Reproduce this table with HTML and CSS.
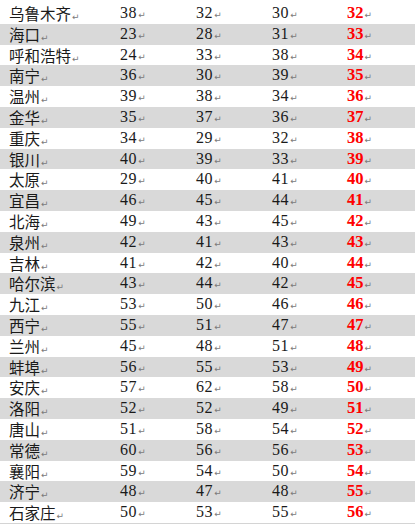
FILE: index.html
```html
<!DOCTYPE html>
<html lang="zh">
<head>
<meta charset="utf-8">
<title>城市排名</title>
<link rel="stylesheet" href="styles.css">
</head>
<body>
<div class="table">
  <div class="row"><span class="city">乌鲁木齐<i class="pm">↵</i></span><span class="num">38<i class="pm">↵</i></span><span class="num">32<i class="pm">↵</i></span><span class="num">30<i class="pm">↵</i></span><span class="rank">32<i class="pm">↵</i></span></div>
  <div class="row alt"><span class="city">海口<i class="pm">↵</i></span><span class="num">23<i class="pm">↵</i></span><span class="num">28<i class="pm">↵</i></span><span class="num">31<i class="pm">↵</i></span><span class="rank">33<i class="pm">↵</i></span></div>
  <div class="row"><span class="city">呼和浩特<i class="pm">↵</i></span><span class="num">24<i class="pm">↵</i></span><span class="num">33<i class="pm">↵</i></span><span class="num">38<i class="pm">↵</i></span><span class="rank">34<i class="pm">↵</i></span></div>
  <div class="row alt"><span class="city">南宁<i class="pm">↵</i></span><span class="num">36<i class="pm">↵</i></span><span class="num">30<i class="pm">↵</i></span><span class="num">39<i class="pm">↵</i></span><span class="rank">35<i class="pm">↵</i></span></div>
  <div class="row"><span class="city">温州<i class="pm">↵</i></span><span class="num">39<i class="pm">↵</i></span><span class="num">38<i class="pm">↵</i></span><span class="num">34<i class="pm">↵</i></span><span class="rank">36<i class="pm">↵</i></span></div>
  <div class="row alt"><span class="city">金华<i class="pm">↵</i></span><span class="num">35<i class="pm">↵</i></span><span class="num">37<i class="pm">↵</i></span><span class="num">36<i class="pm">↵</i></span><span class="rank">37<i class="pm">↵</i></span></div>
  <div class="row"><span class="city">重庆<i class="pm">↵</i></span><span class="num">34<i class="pm">↵</i></span><span class="num">29<i class="pm">↵</i></span><span class="num">32<i class="pm">↵</i></span><span class="rank">38<i class="pm">↵</i></span></div>
  <div class="row alt"><span class="city">银川<i class="pm">↵</i></span><span class="num">40<i class="pm">↵</i></span><span class="num">39<i class="pm">↵</i></span><span class="num">33<i class="pm">↵</i></span><span class="rank">39<i class="pm">↵</i></span></div>
  <div class="row"><span class="city">太原<i class="pm">↵</i></span><span class="num">29<i class="pm">↵</i></span><span class="num">40<i class="pm">↵</i></span><span class="num">41<i class="pm">↵</i></span><span class="rank">40<i class="pm">↵</i></span></div>
  <div class="row alt"><span class="city">宜昌<i class="pm">↵</i></span><span class="num">46<i class="pm">↵</i></span><span class="num">45<i class="pm">↵</i></span><span class="num">44<i class="pm">↵</i></span><span class="rank">41<i class="pm">↵</i></span></div>
  <div class="row"><span class="city">北海<i class="pm">↵</i></span><span class="num">49<i class="pm">↵</i></span><span class="num">43<i class="pm">↵</i></span><span class="num">45<i class="pm">↵</i></span><span class="rank">42<i class="pm">↵</i></span></div>
  <div class="row alt"><span class="city">泉州<i class="pm">↵</i></span><span class="num">42<i class="pm">↵</i></span><span class="num">41<i class="pm">↵</i></span><span class="num">43<i class="pm">↵</i></span><span class="rank">43<i class="pm">↵</i></span></div>
  <div class="row"><span class="city">吉林<i class="pm">↵</i></span><span class="num">41<i class="pm">↵</i></span><span class="num">42<i class="pm">↵</i></span><span class="num">40<i class="pm">↵</i></span><span class="rank">44<i class="pm">↵</i></span></div>
  <div class="row alt"><span class="city">哈尔滨<i class="pm">↵</i></span><span class="num">43<i class="pm">↵</i></span><span class="num">44<i class="pm">↵</i></span><span class="num">42<i class="pm">↵</i></span><span class="rank">45<i class="pm">↵</i></span></div>
  <div class="row"><span class="city">九江<i class="pm">↵</i></span><span class="num">53<i class="pm">↵</i></span><span class="num">50<i class="pm">↵</i></span><span class="num">46<i class="pm">↵</i></span><span class="rank">46<i class="pm">↵</i></span></div>
  <div class="row alt"><span class="city">西宁<i class="pm">↵</i></span><span class="num">55<i class="pm">↵</i></span><span class="num">51<i class="pm">↵</i></span><span class="num">47<i class="pm">↵</i></span><span class="rank">47<i class="pm">↵</i></span></div>
  <div class="row"><span class="city">兰州<i class="pm">↵</i></span><span class="num">45<i class="pm">↵</i></span><span class="num">48<i class="pm">↵</i></span><span class="num">51<i class="pm">↵</i></span><span class="rank">48<i class="pm">↵</i></span></div>
  <div class="row alt"><span class="city">蚌埠<i class="pm">↵</i></span><span class="num">56<i class="pm">↵</i></span><span class="num">55<i class="pm">↵</i></span><span class="num">53<i class="pm">↵</i></span><span class="rank">49<i class="pm">↵</i></span></div>
  <div class="row"><span class="city">安庆<i class="pm">↵</i></span><span class="num">57<i class="pm">↵</i></span><span class="num">62<i class="pm">↵</i></span><span class="num">58<i class="pm">↵</i></span><span class="rank">50<i class="pm">↵</i></span></div>
  <div class="row alt"><span class="city">洛阳<i class="pm">↵</i></span><span class="num">52<i class="pm">↵</i></span><span class="num">52<i class="pm">↵</i></span><span class="num">49<i class="pm">↵</i></span><span class="rank">51<i class="pm">↵</i></span></div>
  <div class="row"><span class="city">唐山<i class="pm">↵</i></span><span class="num">51<i class="pm">↵</i></span><span class="num">58<i class="pm">↵</i></span><span class="num">54<i class="pm">↵</i></span><span class="rank">52<i class="pm">↵</i></span></div>
  <div class="row alt"><span class="city">常德<i class="pm">↵</i></span><span class="num">60<i class="pm">↵</i></span><span class="num">56<i class="pm">↵</i></span><span class="num">56<i class="pm">↵</i></span><span class="rank">53<i class="pm">↵</i></span></div>
  <div class="row"><span class="city">襄阳<i class="pm">↵</i></span><span class="num">59<i class="pm">↵</i></span><span class="num">54<i class="pm">↵</i></span><span class="num">50<i class="pm">↵</i></span><span class="rank">54<i class="pm">↵</i></span></div>
  <div class="row alt"><span class="city">济宁<i class="pm">↵</i></span><span class="num">48<i class="pm">↵</i></span><span class="num">47<i class="pm">↵</i></span><span class="num">48<i class="pm">↵</i></span><span class="rank">55<i class="pm">↵</i></span></div>
  <div class="row"><span class="city">石家庄<i class="pm">↵</i></span><span class="num">50<i class="pm">↵</i></span><span class="num">53<i class="pm">↵</i></span><span class="num">55<i class="pm">↵</i></span><span class="rank">56<i class="pm">↵</i></span></div>
</div>
</body>
</html>
```

FILE: styles.css
```css
html, body {
  margin: 0;
  padding: 0;
  background: #ffffff;
}

body {
  width: 415px;
  height: 524px;
  overflow: hidden;
  padding-top: 3px;
  box-sizing: border-box;
}

.table {
  display: flex;
  flex-direction: column;
  border-bottom: 1px solid #d4d4d4;
}

.row {
  display: grid;
  grid-template-columns: 111px 76px 76px 75px 1fr;
  height: 20.8px;
  line-height: 20.8px;
  font-family: "Liberation Serif", "Noto Sans CJK SC", serif;
  font-size: 16px;
  color: #1a1a1a;
  white-space: nowrap;
}

.row.alt {
  background: #d9d9d9;
}

.row > span {
  padding-left: 9px;
  height: 20.8px;
  overflow: hidden;
}

.city {
  font-family: "Noto Sans CJK SC", sans-serif;
  font-size: 15.5px;
  line-height: 20.8px;
  letter-spacing: 0;
}

.num {
  letter-spacing: 0.6px;
}

.rank {
  color: #ff0000;
  font-weight: bold;
  font-size: 16.5px;
}

.pm {
  font-style: normal;
  font-weight: normal;
  font-family: "DejaVu Sans", sans-serif;
  font-size: 9px;
  color: #7a7a7a;
  margin-left: 1px;
  letter-spacing: 0;
}
```
